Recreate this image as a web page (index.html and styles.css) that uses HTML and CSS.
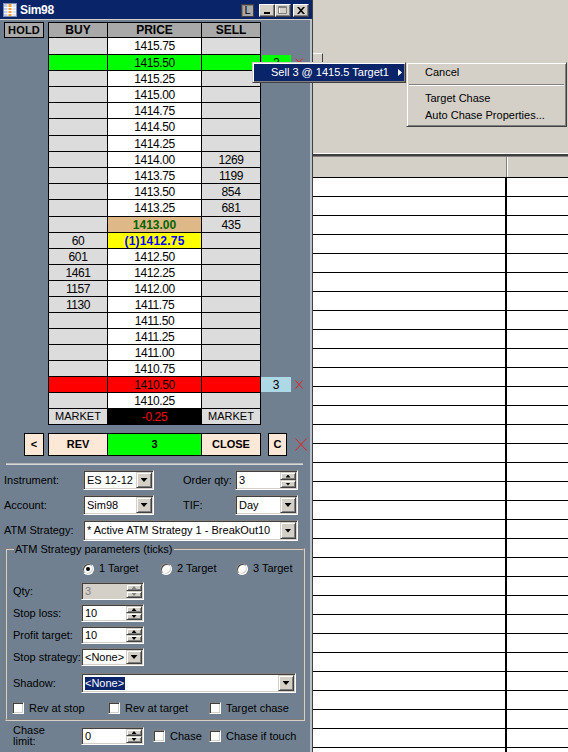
FILE: index.html
```html
<!DOCTYPE html>
<html>
<head>
<meta charset="utf-8">
<title>Sim98</title>
<link rel="stylesheet" href="styles.css">
</head>
<body>
<div class="desk">
  <section class="dom">
    <header class="titlebar">
      <svg class="app-icon" width="14" height="14" viewBox="0 0 14 14">
        <rect x="0.5" y="0.5" width="13" height="13" fill="#e6e8f0" stroke="#7d8cae"/>
        <rect x="1" y="1" width="4" height="12" fill="#c3cbe2"/>
        <rect x="5" y="1" width="4" height="12" fill="#f2a23c"/>
        <rect x="9" y="1" width="4" height="12" fill="#dfe3ee"/>
        <path d="M1 4.5h12M1 7.5h12M1 10.5h12M5 1v12M9 1v12" stroke="#ffffff"/>
      </svg>
      <span class="title">Sim98</span>
      <span class="tb-lock">L</span>
      <span class="tb-btn"><svg width="8" height="7" viewBox="0 0 8 7"><rect x="1" y="5" width="6" height="2" fill="#000"/></svg></span>
      <span class="tb-btn"><svg width="10" height="9" viewBox="0 0 10 9"><path d="M1.5 1.5h7v6h-7z" fill="none" stroke="#fff"/><path d="M0.5 0.5h8v7h-8zM0.5 1.5h8" fill="none" stroke="#808080"/></svg></span>
      <span class="tb-btn close"><svg width="8" height="7" viewBox="0 0 8 7"><path d="M0 0h2l2 2.3L6 0h2L5 3.5 8 7H6L4 4.7 2 7H0l3-3.5z" fill="#000"/></svg></span>
    </header>

    <div class="ladder">
      <div class="lrow head">
        <span class="gut"><span class="hold">HOLD</span></span>
        <span class="c hd">BUY</span><span class="c hd">PRICE</span><span class="c hd">SELL</span>
      </div>
      <div class="lrow tall"><span class="gut"></span><span class="c"></span><span class="c p">1415.75</span><span class="c"></span></div>
      <div class="lrow lime"><span class="gut"></span><span class="c"></span><span class="c p">1415.50</span><span class="c"></span>
        <span class="mk mk-lime">3</span>
        <span class="mk-x"><svg width="8" height="9" viewBox="0 0 8 9"><path d="M0.5 0.5l7 8M7.5 0.5l-7 8" stroke="#e02020"/></svg></span>
      </div>
      <div class="lrow"><span class="gut"></span><span class="c"></span><span class="c p">1415.25</span><span class="c"></span></div>
      <div class="lrow"><span class="gut"></span><span class="c"></span><span class="c p">1415.00</span><span class="c"></span></div>
      <div class="lrow"><span class="gut"></span><span class="c"></span><span class="c p">1414.75</span><span class="c"></span></div>
      <div class="lrow tall"><span class="gut"></span><span class="c"></span><span class="c p">1414.50</span><span class="c"></span></div>
      <div class="lrow"><span class="gut"></span><span class="c"></span><span class="c p">1414.25</span><span class="c"></span></div>
      <div class="lrow"><span class="gut"></span><span class="c"></span><span class="c p">1414.00</span><span class="c">1269</span></div>
      <div class="lrow"><span class="gut"></span><span class="c"></span><span class="c p">1413.75</span><span class="c">1199</span></div>
      <div class="lrow"><span class="gut"></span><span class="c"></span><span class="c p">1413.50</span><span class="c">854</span></div>
      <div class="lrow tall"><span class="gut"></span><span class="c"></span><span class="c p">1413.25</span><span class="c">681</span></div>
      <div class="lrow"><span class="gut"></span><span class="c"></span><span class="c p last">1413.00</span><span class="c">435</span></div>
      <div class="lrow"><span class="gut"></span><span class="c">60</span><span class="c p inside">(1)1412.75</span><span class="c"></span></div>
      <div class="lrow"><span class="gut"></span><span class="c">601</span><span class="c p">1412.50</span><span class="c"></span></div>
      <div class="lrow"><span class="gut"></span><span class="c">1461</span><span class="c p">1412.25</span><span class="c"></span></div>
      <div class="lrow"><span class="gut"></span><span class="c">1157</span><span class="c p">1412.00</span><span class="c"></span></div>
      <div class="lrow"><span class="gut"></span><span class="c">1130</span><span class="c p">1411.75</span><span class="c"></span></div>
      <div class="lrow"><span class="gut"></span><span class="c"></span><span class="c p">1411.50</span><span class="c"></span></div>
      <div class="lrow"><span class="gut"></span><span class="c"></span><span class="c p">1411.25</span><span class="c"></span></div>
      <div class="lrow"><span class="gut"></span><span class="c"></span><span class="c p">1411.00</span><span class="c"></span></div>
      <div class="lrow"><span class="gut"></span><span class="c"></span><span class="c p">1410.75</span><span class="c"></span></div>
      <div class="lrow stop"><span class="gut"></span><span class="c"></span><span class="c p">1410.50</span><span class="c"></span>
        <span class="mk mk-sky">3</span>
        <span class="mk-x"><svg width="8" height="9" viewBox="0 0 8 9"><path d="M0.5 0.5l7 8M7.5 0.5l-7 8" stroke="#e02020"/></svg></span>
      </div>
      <div class="lrow"><span class="gut"></span><span class="c"></span><span class="c p">1410.25</span><span class="c"></span></div>
      <div class="lrow"><span class="gut"></span><span class="c mkt">MARKET</span><span class="c net">-0.25</span><span class="c mkt">MARKET</span></div>
    </div>

    <div class="actions">
      <span class="btn back">&lt;</span>
      <span class="btn">REV</span>
      <span class="btn pos">3</span>
      <span class="btn">CLOSE</span>
      <span class="btn cc">C</span>
      <span class="act-x"><svg width="12" height="13" viewBox="0 0 12 13"><path d="M0.5 0.5l11 12M11.5 0.5l-11 12" stroke="#e02020"/></svg></span>
    </div>

    <div class="rule"></div>

    <div class="order">
      <span class="lbl">Instrument:</span>
      <span class="field"><span class="val">ES 12-12</span><span class="drop"></span></span>
      <span class="lbl col4">Order qty:</span>
      <span class="field"><span class="val">3</span><span class="spin"><i></i><i class="dn"></i></span></span>

      <span class="lbl">Account:</span>
      <span class="field"><span class="val">Sim98</span><span class="drop"></span></span>
      <span class="lbl col4">TIF:</span>
      <span class="field"><span class="val">Day</span><span class="drop"></span></span>

      <span class="lbl">ATM Strategy:</span>
      <span class="field wide"><span class="val">* Active ATM Strategy 1 - BreakOut10</span><span class="drop"></span></span>
    </div>

    <fieldset class="group">
      <legend>ATM Strategy parameters (ticks)</legend>
      <div class="targets">
        <span class="opt t1"><span class="radio on"></span>1 Target</span>
        <span class="opt t2"><span class="radio"></span>2 Target</span>
        <span class="opt"><span class="radio"></span>3 Target</span>
      </div>
      <div class="prow first"><span class="plbl">Qty:</span><span class="field off short"><span class="val">3</span><span class="spin"><i></i><i class="dn"></i></span></span></div>
      <div class="prow"><span class="plbl">Stop loss:</span><span class="field short"><span class="val">10</span><span class="spin"><i></i><i class="dn"></i></span></span></div>
      <div class="prow"><span class="plbl">Profit target:</span><span class="field short"><span class="val">10</span><span class="spin"><i></i><i class="dn"></i></span></span></div>
      <div class="prow"><span class="plbl">Stop strategy:</span><span class="field short"><span class="val">&lt;None&gt;</span><span class="drop"></span></span></div>
      <div class="prow shadow"><span class="plbl">Shadow:</span><span class="field long"><span class="val"><span class="sel">&lt;None&gt;</span></span><span class="drop"></span></span></div>
      <div class="checks">
        <span class="opt c1"><span class="box"></span>Rev at stop</span>
        <span class="opt c2"><span class="box"></span>Rev at target</span>
        <span class="opt"><span class="box"></span>Target chase</span>
      </div>
    </fieldset>

    <div class="chase">
      <span class="plbl two">Chase<br>limit:</span>
      <span class="field short"><span class="val">0</span><span class="spin"><i></i><i class="dn"></i></span></span>
      <span class="opt ch1"><span class="box"></span>Chase</span>
      <span class="opt"><span class="box"></span>Chase if touch</span>
    </div>
  </section>

  <section class="blotter">
    <div class="blotter-top"><span class="stub"></span></div>
    <div class="blotter-rule"></div>
    <div class="bhead"><span class="bc1"></span><span class="bc2"></span></div>
    <div class="brows">
      <div class="brow"><span></span></div><div class="brow"><span></span></div><div class="brow"><span></span></div>
      <div class="brow"><span></span></div><div class="brow"><span></span></div><div class="brow"><span></span></div>
      <div class="brow"><span></span></div><div class="brow"><span></span></div><div class="brow"><span></span></div>
      <div class="brow"><span></span></div><div class="brow"><span></span></div><div class="brow"><span></span></div>
      <div class="brow"><span></span></div><div class="brow"><span></span></div><div class="brow"><span></span></div>
      <div class="brow"><span></span></div><div class="brow"><span></span></div><div class="brow"><span></span></div>
      <div class="brow"><span></span></div><div class="brow"><span></span></div><div class="brow"><span></span></div>
      <div class="brow"><span></span></div><div class="brow"><span></span></div><div class="brow"><span></span></div>
      <div class="brow"><span></span></div><div class="brow"><span></span></div><div class="brow"><span></span></div>
      <div class="brow"><span></span></div><div class="brow"><span></span></div><div class="brow"><span></span></div>
      <div class="brow"><span></span></div>
    </div>
  </section>
</div>

<div class="menu m1">
  <div class="item hot">Sell 3 @ 1415.5 Target1<svg class="sub" width="4" height="7" viewBox="0 0 4 7"><path d="M0 0l4 3.5L0 7z" fill="#fff"/></svg></div>
</div>
<div class="menu m2">
  <div class="item">Cancel</div>
  <div class="msep"></div>
  <div class="item">Target Chase</div>
  <div class="item">Auto Chase Properties...</div>
</div>
</body>
</html>
```

FILE: styles.css
```css
:root {
  --face: #d4d0c8;
  --slate: #708090;
  --navy: #0a246a;
  --cell: #dcdcdc;
  --ui: "Liberation Sans", Arial, sans-serif;
}

* { box-sizing: border-box; }

html, body { margin: 0; }

body {
  width: 568px;
  height: 752px;
  overflow: hidden;
  position: relative;
  background: var(--face);
  font: 11px/1 var(--ui);
  color: #000;
}

.desk { display: flex; height: 752px; }

/* ---------- DOM window ---------- */
.dom {
  width: 313px;
  flex: none;
  background: var(--slate);
  border-right: 1px solid #404040;
  box-shadow: inset -2px 0 #b9c0c8;
  display: flex;
  flex-direction: column;
}

.titlebar {
  height: 20px;
  flex: none;
  background: var(--navy);
  border-bottom: 1px solid var(--face);
  display: flex;
  align-items: flex-start;
  padding: 4px 3px 0 3px;
  color: #fff;
}
.app-icon { margin-top: -1px; flex: none; }
.title { margin-left: 3px; font-weight: bold; font-size: 12px; letter-spacing: -0.3px; line-height: 13px; }
.tb-lock {
  margin-left: auto;
  margin-right: 5px;
  width: 13px;
  height: 13px;
  border: 1px solid #404040;
  background: #a8a8a8;
  box-shadow: inset 1px 1px #808080;
  color: #000;
  font-size: 11px;
  line-height: 11px;
  text-align: center;
}
.tb-btn {
  width: 16px;
  height: 13px;
  background: var(--face);
  border: 1px solid;
  border-color: #fff #404040 #404040 #fff;
  box-shadow: inset -1px -1px #808080;
  display: flex;
  align-items: center;
  justify-content: center;
}
.tb-btn.close { margin-left: 2px; }

/* ---------- price ladder ---------- */
.ladder {
  display: flex;
  flex-direction: column;
  gap: 1px;
  padding-top: 3px;
}
.lrow {
  display: grid;
  grid-template-columns: 48px 58px 93px 58px 30px 1fr;
  column-gap: 1px;
  height: 15px;
}
.lrow.tall { height: 16px; }
.lrow.head { height: 14px; }

.c {
  box-shadow: 0 0 0 1px #000;
  background: var(--cell);
  display: flex;
  align-items: center;
  justify-content: center;
  white-space: nowrap;
  font-size: 12px;
  letter-spacing: -0.4px;
}
.c.p { background: #fff; }
.c.mkt { font-size: 11px; letter-spacing: 0; }
.c.hd { background: #a9a9a9; font-weight: bold; font-size: 12px; letter-spacing: 0; }

.gut { display: flex; }
.hold {
  margin-left: 5px;
  width: 38px;
  background: #a9a9a9;
  box-shadow: 0 0 0 1px #000;
  font-weight: bold;
  letter-spacing: 0.2px;
  display: flex;
  align-items: center;
  justify-content: center;
}

.lrow.lime .c { background: #00ff00; }
.lrow.stop .c { background: #ff0000; }
.c.last { background: #deb887; color: #006400; font-weight: bold; letter-spacing: 0; }
.c.inside { background: #ffff00; color: #0000ff; font-weight: bold; letter-spacing: 0.2px; }
.c.net { background: #000; color: #ff0000; }

.mk {
  display: flex;
  align-items: center;
  justify-content: center;
  font-size: 12px;
}
.mk-lime { background: #00ff00; margin-left: 1px; }
.mk-sky { background: #add8e6; }
.mk-x { display: flex; align-items: center; padding-left: 3px; }

/* ---------- action buttons ---------- */
.actions {
  display: grid;
  grid-template-columns: 48px 58px 93px 58px 30px 1fr;
  column-gap: 1px;
  height: 21px;
  margin-top: 10px;
  flex: none;
}
.btn {
  box-shadow: 0 0 0 1px #000;
  background: #fce8d6;
  font-weight: bold;
  display: flex;
  align-items: center;
  justify-content: center;
}
.btn.back { margin-left: 25px; width: 18px; }
.btn.pos { background: #00ff00; }
.btn.cc { margin-left: 8px; width: 17px; }
.act-x { display: flex; align-items: center; padding-left: 3px; }

.rule {
  height: 2px;
  margin: 8px 9px 0 6px;
  border-top: 1px solid #b4b8bc;
  border-bottom: 1px solid #d8d8d8;
  flex: none;
}

/* ---------- classic controls ---------- */
.field {
  display: flex;
  background: #fff;
  border: 1px solid;
  border-color: #808080 #fff #fff #808080;
  box-shadow: inset 1px 1px #404040, inset -1px -1px var(--face);
  padding: 1px;
  height: 100%;
  min-width: 0;
  font-size: 11px;
}
.field.off { background: var(--face); color: #808080; }
.val {
  flex: 1;
  min-width: 0;
  padding-left: 2px;
  display: flex;
  align-items: center;
  white-space: nowrap;
  overflow: hidden;
}
.sel { background: var(--navy); color: #fff; padding: 1px 1px 1px 0; }

.drop, .spin i {
  background: var(--face);
  border: 1px solid;
  border-color: var(--face) #404040 #404040 var(--face);
  box-shadow: inset 1px 1px #fff, inset -1px -1px #808080;
  display: flex;
  align-items: center;
  justify-content: center;
}
.drop { flex: none; width: 16px; }
.drop::after {
  content: "";
  width: 7px;
  height: 4px;
  background: #000;
  clip-path: polygon(0 0, 100% 0, 50% 100%);
}
.spin { flex: none; width: 16px; display: flex; flex-direction: column; }
.spin i { flex: 1; }
.spin i::after {
  content: "";
  width: 5px;
  height: 3px;
  background: #000;
  clip-path: polygon(50% 0, 100% 100%, 0 100%);
}
.spin i.dn::after { clip-path: polygon(0 0, 100% 0, 50% 100%); }
.field.off .spin i::after { background: #808080; }

.radio, .box {
  flex: none;
  width: 12px;
  height: 12px;
  background: #fff;
  border: 1px solid;
  border-color: #808080 #fff #fff #808080;
  box-shadow: inset 1px 1px #404040, inset -1px -1px var(--face);
  display: grid;
  place-items: center;
}
.radio { border-radius: 50%; }
.radio.on::after {
  content: "";
  width: 4px;
  height: 4px;
  border-radius: 50%;
  background: #000;
}

.opt { display: flex; align-items: center; gap: 5px; white-space: nowrap; }

/* ---------- order form ---------- */
.order {
  display: grid;
  grid-template-columns: 79px 71px 29px 52px 63px;
  grid-template-rows: 20px 20px 21px;
  row-gap: 5px;
  padding-left: 4px;
  margin-top: 5px;
  align-items: center;
  flex: none;
}
.lbl { white-space: nowrap; }
.lbl.col4 { grid-column: 4; }
.field.wide { grid-column: 2 / 6; }

/* ---------- ATM parameters ---------- */
.group {
  margin: 0 7px 0 5px;
  padding: 0 6px 5px 5px;
  border: 2px groove var(--face);
  min-inline-size: 0;
  flex: none;
}
.group legend {
  padding: 0 1px;
  margin-left: 2px;
  line-height: 16px;
}
.targets {
  display: flex;
  height: 13px;
  margin-top: 5px;
  padding-left: 70px;
}
.targets .t1 { width: 78px; }
.targets .t2 { width: 76px; }

.prow {
  display: flex;
  align-items: center;
  height: 18px;
  margin-top: 4px;
}
.prow.first { margin-top: 7px; }
.prow.shadow { height: 20px; margin-top: 7px; }
.plbl { width: 69px; flex: none; padding-left: 1px; white-space: nowrap; }
.field.short { width: 63px; flex: none; }
.field.long { width: 215px; flex: none; }

.checks {
  display: flex;
  height: 12px;
  margin-top: 9px;
}
.checks .c1 { width: 96px; }
.checks .c2 { width: 101px; }

.chase {
  display: flex;
  align-items: center;
  height: 18px;
  margin-top: 6px;
  padding-left: 12px;
  flex: none;
}
.plbl.two { line-height: 11px; }
.chase .ch1 { margin-left: 9px; width: 56px; }

/* ---------- order grid pane ---------- */
.blotter {
  flex: 1;
  min-width: 0;
  display: flex;
  flex-direction: column;
}
.blotter-top { height: 153px; flex: none; }
.stub {
  display: block;
  margin-top: 53px;
  width: 10px;
  height: 14px;
  border-top: 1px solid #fff;
  border-right: 1px solid #404040;
}
.blotter-rule {
  height: 4px;
  flex: none;
  border-top: 1px solid #fff;
  border-bottom: 1px solid #808080;
  background: #404040;
}
.bhead {
  height: 21px;
  flex: none;
  display: flex;
  background: var(--face);
  border-bottom: 1px solid #000;
}
.bc1 { width: 194px; border-right: 1px solid #808080; }
.bc2 { flex: 1; border-left: 1px solid #fff; }
.brow {
  height: 19px;
  flex: none;
  display: flex;
  background: #fff;
  border-bottom: 1px solid #000;
}
.brow span { width: 194px; border-right: 2px solid #000; }

/* ---------- context menus ---------- */
.menu {
  position: absolute;
  background: var(--face);
  border: 1px solid;
  border-color: var(--face) #404040 #404040 var(--face);
  box-shadow: inset 1px 1px #fff, inset -1px -1px #808080;
  padding: 1px;
}
.m1 { left: 252px; top: 62px; width: 154px; height: 21px; }
.m2 { left: 406px; top: 62px; width: 161px; padding-bottom: 2px; }
.item {
  height: 17px;
  display: flex;
  align-items: center;
  padding-left: 17px;
  white-space: nowrap;
}
.item.hot { background: var(--navy); color: #fff; }
.item .sub { margin-left: auto; margin-right: 2px; }
.msep {
  height: 2px;
  margin: 3px 1px 4px;
  border-top: 1px solid #808080;
  border-bottom: 1px solid #fff;
}
```
